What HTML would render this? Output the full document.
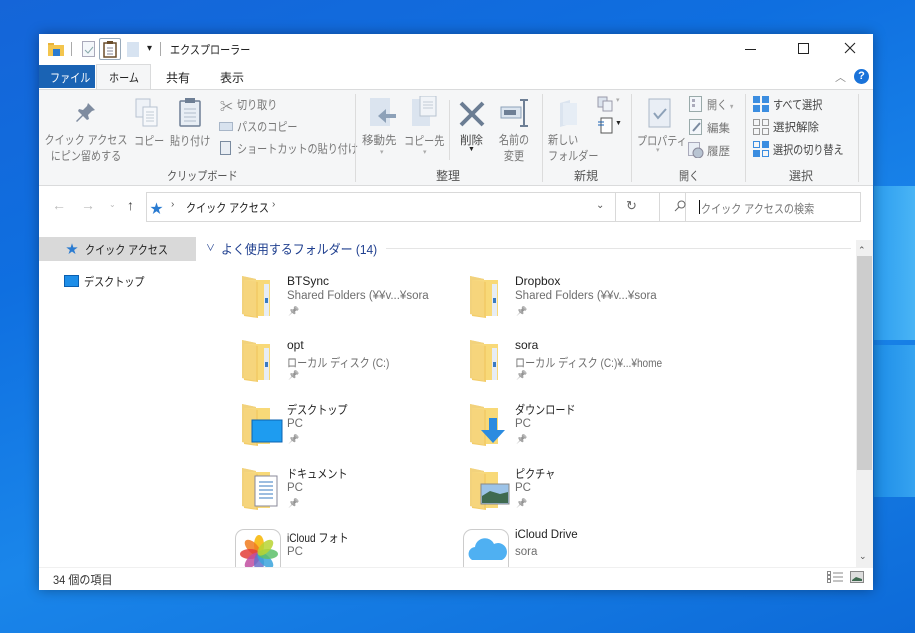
<!DOCTYPE html>
<html><head><meta charset="utf-8">
<style>
*{margin:0;padding:0;box-sizing:border-box}
body{width:915px;height:633px;overflow:hidden;position:relative;font-family:"Liberation Sans","Noto Sans CJK JP",sans-serif;font-size:12px;color:#222;
background:linear-gradient(160deg,#1565d8 0%,#0f6fe0 30%,#1a86ea 60%,#0d6ad8 100%)}
.a{position:absolute;white-space:nowrap}
.j{transform:scaleX(.84);transform-origin:0 0}
.jc{transform:scaleX(.84);transform-origin:50% 0;text-align:center}
.l{font-size:11.5px}
.win{position:absolute;left:39px;top:34px;width:834px;height:556px;background:#fff;box-shadow:0 0 12px rgba(0,0,0,.35)}
.g{color:#444}
.dim{color:#777}
.lbl{color:#555}
.sep{position:absolute;width:1px;background:#dcdcdc}
.sub{color:#6d6d6d}
.pin{color:#999;font-size:9px;filter:grayscale(1);opacity:.6}
</style></head><body>
<div class="a" style="left:874px;top:186px;width:41px;height:154px;background:linear-gradient(90deg,#2ea0f0,#4fbaf7);opacity:.9"></div>
<div class="a" style="left:874px;top:345px;width:41px;height:152px;background:linear-gradient(90deg,#1e8fe8,#3aa8f2);opacity:.9"></div>

<div class="win">
<svg class="a" style="left:9px;top:8px" width="16" height="14"><rect x="0" y="1" width="6" height="3" fill="#e8b33a"/><rect x="0" y="3" width="16" height="11" fill="#f3c54e"/><rect x="5" y="7" width="7" height="7" fill="#2a7bd1"/></svg>
<div class="a" style="left:32px;top:8px;width:1px;height:14px;background:#aaa"></div>
<svg class="a" style="left:43px;top:7px" width="14" height="16"><rect x=".5" y=".5" width="12" height="15" fill="#f4f7fb" stroke="#aab"/><path d="M3 9l3 3 5-6" stroke="#8aa" fill="none"/></svg>
<div class="a" style="left:60px;top:4px;width:22px;height:22px;border:1px solid #9ab;border-radius:2px"></div>
<svg class="a" style="left:64px;top:7px" width="14" height="17"><rect x="1" y="2" width="12" height="14" fill="#fff" stroke="#6b4d2a" stroke-width="1.5"/><rect x="4" y="0" width="6" height="3" fill="#6b4d2a"/><path d="M4 7h6M4 10h6M4 13h6" stroke="#889"/></svg>
<div class="a" style="left:88px;top:8px;width:12px;height:15px;background:#d7e3f1"></div>
<div class="a" style="left:108px;top:9px;font-size:10px">▾</div>
<div class="a" style="left:121px;top:8px;width:1px;height:14px;background:#aaa"></div>
<div class="a j" style="left:131px;top:7px;font-size:12px;color:#222">エクスプローラー</div>
<div class="a" style="left:706px;top:15px;width:11px;height:1px;background:#222"></div>
<div class="a" style="left:759px;top:9px;width:11px;height:11px;border:1px solid #222"></div>
<svg class="a" style="left:805px;top:8px" width="12" height="12"><path d="M1 1l10 10M11 1L1 11" stroke="#222" stroke-width="1.1"/></svg>

<div class="a" style="left:0;top:31px;width:56px;height:23px;background:#1a63b4"></div>
<div class="a j" style="left:11px;top:35px;color:#fff">ファイル</div>
<div class="a" style="left:57px;top:30px;width:55px;height:26px;background:#f5f6f7;border:1px solid #dadbdc;border-bottom:none"></div>
<div class="a j" style="left:70px;top:35px">ホーム</div>
<div class="a" style="left:127px;top:35px">共有</div>
<div class="a" style="left:181px;top:35px">表示</div>
<div class="a" style="left:796px;top:35px;color:#888;font-size:11px">︿</div>
<div class="a" style="left:815px;top:35px;width:15px;height:15px;border-radius:50%;background:#1a73d9;color:#fff;font-size:11px;font-weight:bold;text-align:center;line-height:15px">?</div>

<div class="a" style="left:0;top:55px;width:834px;height:97px;background:#f5f6f7;border-top:1px solid #dadbdc;border-bottom:1px solid #dadbdc"></div>
<svg class="a" style="left:36px;top:67px" width="22" height="24"><path d="M13 2l7 7-3 1-4 4 1 4-2 1-4-4-6 6-1-1 6-6-4-4 1-2 4 1 4-4z" fill="#7f8ca0"/></svg>
<div class="a dim jc" style="left:-3px;top:98px;width:100px;line-height:16px">クイック アクセス<br>にピン留めする</div>
<svg class="a" style="left:96px;top:64px" width="24" height="30"><rect x="1" y="1" width="14" height="18" fill="#eef2f7" stroke="#b8c3d0"/><rect x="8" y="9" width="14" height="19" fill="#f6f8fb" stroke="#b8c3d0"/><path d="M11 14h8M11 17h8M11 20h8M11 23h8" stroke="#c2cbd6"/></svg>
<div class="a dim j" style="left:95px;top:98px">コピー</div>
<svg class="a" style="left:139px;top:63px" width="24" height="30"><rect x="2" y="4" width="20" height="25" rx="1" fill="#e8eef5" stroke="#6e7f95" stroke-width="1.5"/><rect x="7" y="1" width="10" height="5" fill="#6e7f95"/><path d="M6 12h12M6 16h12M6 20h12M6 24h12" stroke="#b0bccc"/></svg>
<div class="a dim j" style="left:131px;top:98px">貼り付け</div>
<div class="a dim" style="left:181px;top:62px;font-size:13px">✂</div>
<div class="a dim j" style="left:198px;top:62px">切り取り</div>
<div class="a" style="left:180px;top:88px;width:14px;height:9px;background:#d8e2ee;border:1px solid #a8b6c8"></div>
<div class="a dim j" style="left:198px;top:84px">パスのコピー</div>
<div class="a" style="left:181px;top:107px;width:11px;height:14px;border:1px solid #7a8ba0;background:#e9eef4"></div>
<div class="a dim j" style="left:198px;top:106px">ショートカットの貼り付け</div>
<div class="a lbl j" style="left:128px;top:133px">クリップボード</div>
<div class="sep" style="left:316px;top:60px;height:88px"></div>

<svg class="a" style="left:331px;top:64px" width="26" height="30"><rect x="0" y="0" width="20" height="28" fill="#dbe4ef"/><path d="M26 16h-10v-5l-8 7 8 7v-5h10z" fill="#8da1b8"/></svg>
<div class="a dim" style="left:323px;top:98px;font-size:11.5px">移動先</div>
<svg class="a" style="left:373px;top:62px" width="26" height="32"><rect x="0" y="3" width="18" height="27" fill="#dbe4ef"/><rect x="8" y="0" width="16" height="20" fill="#f1f4f8" stroke="#b8c3d0"/><path d="M11 6h10M11 9h10M11 12h10" stroke="#c2cbd6"/></svg>
<div class="a dim j" style="left:365px;top:98px">コピー先</div>
<div class="a" style="left:341px;top:114px;color:#aaa;font-size:7px">▾</div><div class="a" style="left:384px;top:114px;color:#aaa;font-size:7px">▾</div>
<div class="sep" style="left:410px;top:66px;height:60px"></div>
<svg class="a" style="left:420px;top:67px" width="26" height="26"><path d="M2 2l22 22M24 2L2 24" stroke="#6b7d93" stroke-width="4"/></svg>
<div class="a g" style="left:421px;top:98px;font-size:11.5px">削除</div>
<div class="a" style="left:429px;top:112px;font-size:7px">▼</div>
<svg class="a" style="left:461px;top:64px" width="30" height="30"><rect x="1" y="9" width="20" height="11" fill="#dce5ef" stroke="#8da1b8"/><rect x="4" y="12" width="12" height="5" fill="#6e7f95"/><path d="M24 2v26M20 2h8M20 28h8" stroke="#6e7f95" stroke-width="2"/></svg>
<div class="a dim jc" style="left:455px;top:98px;width:40px;line-height:16px">名前の<br>変更</div>
<div class="a lbl" style="left:397px;top:133px">整理</div>
<div class="sep" style="left:503px;top:60px;height:88px"></div>

<svg class="a" style="left:519px;top:65px" width="24" height="30"><path d="M2 4l10-3v24L2 28z" fill="#dbe4ef"/><rect x="5" y="4" width="14" height="22" fill="#e6edf5"/></svg>
<div class="a dim j" style="left:509px;top:98px;line-height:16px">新しい<br>フォルダー</div>
<svg class="a" style="left:558px;top:62px" width="22" height="16"><rect x="1" y="1" width="9" height="10" fill="#dce4ee" stroke="#99a"/><rect x="6" y="5" width="9" height="10" fill="#eef2f7" stroke="#99a"/></svg>
<div class="a" style="left:577px;top:62px;color:#aaa;font-size:7px">▾</div>
<svg class="a" style="left:559px;top:83px" width="16" height="18"><rect x="3" y="1" width="11" height="15" fill="#fff" stroke="#555"/><path d="M0 5h6M0 8h6" stroke="#1a63b4"/></svg>
<div class="a" style="left:576px;top:86px;font-size:7px">▼</div>
<div class="a lbl" style="left:535px;top:133px">新規</div>
<div class="sep" style="left:592px;top:60px;height:88px"></div>

<svg class="a" style="left:609px;top:64px" width="24" height="30"><rect x="1" y="1" width="21" height="28" fill="#e9eef5" stroke="#aab8c8"/><path d="M6 15l4 5 8-9" stroke="#8da1b8" stroke-width="2" fill="none"/></svg>
<div class="a dim j" style="left:598px;top:98px">プロパティ</div>
<div class="a" style="left:617px;top:112px;color:#aaa;font-size:7px">▾</div>
<svg class="a" style="left:650px;top:62px" width="14" height="16"><rect x=".5" y=".5" width="12" height="15" fill="#f3f6fa" stroke="#9aa"/><rect x="3" y="3" width="3" height="3" fill="#aab"/><rect x="3" y="8" width="3" height="3" fill="#aab"/></svg>
<div class="a dim j" style="left:668px;top:62px">開く <span style="font-size:8px;color:#aaa">▾</span></div>
<svg class="a" style="left:650px;top:85px" width="14" height="16"><rect x=".5" y=".5" width="12" height="15" fill="#f3f6fa" stroke="#9aa"/><path d="M4 12l7-8" stroke="#7a8aa0" stroke-width="2"/></svg>
<div class="a dim" style="left:668px;top:86px;font-size:11.5px">編集</div>
<svg class="a" style="left:649px;top:108px" width="16" height="16"><rect x=".5" y=".5" width="11" height="13" fill="#e9eef5" stroke="#aab"/><circle cx="10" cy="11" r="5" fill="#b8c4d2" stroke="#889"/></svg>
<div class="a dim" style="left:668px;top:109px;font-size:11.5px">履歴</div>
<div class="a lbl j" style="left:640px;top:133px">開く</div>
<div class="sep" style="left:706px;top:60px;height:88px"></div>

<svg class="a" style="left:714px;top:62px" width="16" height="16"><rect x="0" y="0" width="7" height="7" fill="#3b8de0"/><rect x="9" y="0" width="7" height="7" fill="#3b8de0"/><rect x="0" y="9" width="7" height="7" fill="#3b8de0"/><rect x="9" y="9" width="7" height="7" fill="#3b8de0"/></svg>
<div class="a g j" style="left:734px;top:62px">すべて選択</div>
<svg class="a" style="left:714px;top:85px" width="16" height="16" fill="none" stroke="#999"><rect x=".5" y=".5" width="6" height="6"/><rect x="9.5" y=".5" width="6" height="6"/><rect x=".5" y="9.5" width="6" height="6"/><rect x="9.5" y="9.5" width="6" height="6"/></svg>
<div class="a g" style="left:734px;top:85px;font-size:11.5px">選択解除</div>
<svg class="a" style="left:714px;top:107px" width="16" height="16"><rect x=".5" y=".5" width="6" height="6" fill="none" stroke="#3b8de0"/><rect x="9" y="0" width="7" height="7" fill="#3b8de0"/><rect x="0" y="9" width="7" height="7" fill="#3b8de0"/><rect x="9.5" y="9.5" width="6" height="6" fill="none" stroke="#3b8de0"/></svg>
<div class="a g j" style="left:734px;top:107px">選択の切り替え</div>
<div class="a lbl" style="left:750px;top:133px">選択</div>
<div class="sep" style="left:819px;top:60px;height:88px"></div>

<div class="a" style="left:13px;top:163px;color:#bbb;font-size:14px">←</div>
<div class="a" style="left:42px;top:163px;color:#bbb;font-size:14px">→</div>
<div class="a" style="left:70px;top:166px;color:#bbb;font-size:8px">⌄</div>
<div class="a" style="left:88px;top:163px;color:#444;font-size:14px">↑</div>
<div class="a" style="left:107px;top:158px;width:540px;height:30px;border:1px solid #d9d9d9"></div>
<div class="a" style="left:576px;top:158px;width:1px;height:30px;background:#d9d9d9"></div>
<div class="a" style="left:111px;top:164px;color:#2a7bd1;font-size:13px">★</div>
<div class="a" style="left:132px;top:165px;color:#555;font-size:10px">›</div>
<div class="a j" style="left:147px;top:165px">クイック アクセス</div>
<div class="a" style="left:233px;top:165px;color:#555;font-size:10px">›</div>
<div class="a" style="left:557px;top:166px;color:#555;font-size:10px">⌄</div>
<div class="a" style="left:587px;top:164px;color:#666;font-size:13px">↻</div>
<div class="a" style="left:620px;top:158px;width:202px;height:30px;border:1px solid #d9d9d9"></div>
<svg class="a" style="left:635px;top:166px" width="12" height="12" fill="none" stroke="#666"><circle cx="7.5" cy="4.5" r="3.5"/><path d="M5 7l-4 4"/></svg>
<div class="a" style="left:660px;top:166px;width:1px;height:14px;background:#111"></div>
<div class="a j" style="left:662px;top:166px;color:#777">クイック アクセスの検索</div>

<div class="a" style="left:0;top:203px;width:157px;height:24px;background:#d9d9d9"></div>
<div class="a" style="left:27px;top:206px;color:#2a7bd1;font-size:12px">★</div>
<div class="a j" style="left:46px;top:207px">クイック アクセス</div>
<div class="a" style="left:25px;top:241px;width:15px;height:12px;background:#1e8ee8;border:1px solid #0a5fb0"></div>
<div class="a j" style="left:45px;top:239px">デスクトップ</div>

<div class="a" style="left:167px;top:207px;color:#1f3f8f;font-size:9px">∨</div>
<div class="a" style="left:182px;top:205px;color:#1f3f8f;font-size:13px;transform:scaleX(.92);transform-origin:0 0">よく使用するフォルダー (14)</div>
<div class="a" style="left:347px;top:214px;width:465px;height:1px;background:#e5e5e5"></div>

<svg width="0" height="0" style="position:absolute"><defs>
<g id="fold"><path d="M2 2l14 3v38l-14-3z" fill="#e8c46a"/><path d="M4 6h26v36H4z" fill="#f8d978"/><path d="M4 6l14 2v36l-14-2z" fill="#f3cd6a"/><path d="M2 2l14 3v38l-14-3z" fill="#f6d885" opacity=".7"/></g>
</defs></svg>

<svg class="a" style="left:201px;top:240px" width="36" height="46"><use href="#fold"/><rect x="24" y="10" width="5" height="32" fill="#e7edf4"/><rect x="25" y="24" width="3" height="5" fill="#3a7bc2"/></svg>
<div class="a" style="left:248px;top:240px">BTSync</div><div class="a sub l" style="left:248px;top:256px">Shared Folders (¥¥v...¥sora</div><div class="a pin" style="left:249px;top:272px">📌</div>
<svg class="a" style="left:201px;top:304px" width="36" height="46"><use href="#fold"/><rect x="24" y="10" width="5" height="32" fill="#e7edf4"/><rect x="25" y="24" width="3" height="5" fill="#3a7bc2"/></svg>
<div class="a" style="left:248px;top:304px">opt</div><div class="a sub j" style="left:248px;top:320px">ローカル ディスク (C:)</div><div class="a pin" style="left:249px;top:336px">📌</div>
<svg class="a" style="left:201px;top:368px" width="44" height="46"><use href="#fold"/><rect x="12" y="18" width="30" height="22" fill="#1e9cf0" stroke="#0c63b0"/></svg>
<div class="a j" style="left:248px;top:367px">デスクトップ</div><div class="a sub l" style="left:248px;top:384px">PC</div><div class="a pin" style="left:249px;top:400px">📌</div>
<svg class="a" style="left:201px;top:432px" width="40" height="46"><use href="#fold"/><rect x="15" y="10" width="22" height="30" fill="#fff" stroke="#889"/><path d="M19 16h14M19 20h14M19 24h14M19 28h14M19 32h14" stroke="#3a7bc2"/></svg>
<div class="a j" style="left:248px;top:431px">ドキュメント</div><div class="a sub l" style="left:248px;top:448px">PC</div><div class="a pin" style="left:249px;top:464px">📌</div>
<div class="a" style="left:196px;top:495px;width:46px;height:38px;border:1px solid #ccc;border-bottom:none;border-radius:9px 9px 0 0;overflow:hidden;background:#fff">
<svg width="46" height="38"><g transform="translate(23,24)">
<ellipse rx="5" ry="10" cy="-9" fill="#f7b500" opacity=".85"/><ellipse rx="5" ry="10" cy="-9" fill="#f07b1e" opacity=".85" transform="rotate(-45)"/><ellipse rx="5" ry="10" cy="-9" fill="#e3403a" opacity=".85" transform="rotate(-90)"/><ellipse rx="5" ry="10" cy="-9" fill="#c14da0" opacity=".85" transform="rotate(-135)"/><ellipse rx="5" ry="10" cy="-9" fill="#6a6ec8" opacity=".85" transform="rotate(180)"/><ellipse rx="5" ry="10" cy="-9" fill="#3aa3dc" opacity=".85" transform="rotate(135)"/><ellipse rx="5" ry="10" cy="-9" fill="#5cc06a" opacity=".85" transform="rotate(90)"/><ellipse rx="5" ry="10" cy="-9" fill="#b8d432" opacity=".85" transform="rotate(45)"/></g></svg></div>
<div class="a j" style="left:248px;top:495px">iCloud フォト</div><div class="a sub l" style="left:248px;top:512px">PC</div>

<svg class="a" style="left:429px;top:240px" width="36" height="46"><use href="#fold"/><rect x="24" y="10" width="5" height="32" fill="#e7edf4"/><rect x="25" y="24" width="3" height="5" fill="#3a7bc2"/></svg>
<div class="a" style="left:476px;top:240px">Dropbox</div><div class="a sub l" style="left:476px;top:256px">Shared Folders (¥¥v...¥sora</div><div class="a pin" style="left:477px;top:272px">📌</div>
<svg class="a" style="left:429px;top:304px" width="36" height="46"><use href="#fold"/><rect x="24" y="10" width="5" height="32" fill="#e7edf4"/><rect x="25" y="24" width="3" height="5" fill="#3a7bc2"/></svg>
<div class="a" style="left:476px;top:304px">sora</div><div class="a sub j" style="left:476px;top:320px">ローカル ディスク (C:)¥...¥home</div><div class="a pin" style="left:477px;top:336px">📌</div>
<svg class="a" style="left:429px;top:368px" width="44" height="46"><use href="#fold"/><path d="M21 16h8v12h8l-12 13-12-13h8z" fill="#2b8be0"/></svg>
<div class="a j" style="left:476px;top:367px">ダウンロード</div><div class="a sub l" style="left:476px;top:384px">PC</div><div class="a pin" style="left:477px;top:400px">📌</div>
<svg class="a" style="left:429px;top:432px" width="44" height="46"><use href="#fold"/><rect x="13" y="18" width="28" height="20" fill="#9cc3e8" stroke="#888"/><path d="M14 30l8-5 10 3 8-2v11H14z" fill="#3f6a50"/></svg>
<div class="a j" style="left:476px;top:431px">ピクチャ</div><div class="a sub l" style="left:476px;top:448px">PC</div><div class="a pin" style="left:477px;top:464px">📌</div>
<div class="a" style="left:424px;top:495px;width:46px;height:38px;border:1px solid #ccc;border-bottom:none;border-radius:9px 9px 0 0;overflow:hidden;background:#fff">
<svg width="46" height="38"><path d="M8 30a7 7 0 0 1 3-13 10 10 0 0 1 19-3 8 8 0 0 1 8 16z" fill="#4fb0f2"/></svg></div>
<div class="a" style="left:476px;top:495px;font-size:11.5px">iCloud Drive</div><div class="a sub l" style="left:476px;top:512px">sora</div>

<div class="a" style="left:817px;top:206px;width:17px;height:327px;background:#f0f0f0"></div>
<div class="a" style="left:819px;top:211px;color:#555;font-size:9px">⌃</div>
<div class="a" style="left:818px;top:222px;width:15px;height:214px;background:#cdcdcd"></div>
<div class="a" style="left:820px;top:517px;color:#555;font-size:9px">⌄</div>

<div class="a" style="left:0;top:533px;width:834px;height:1px;background:#f0f0f0"></div>
<div class="a" style="left:14px;top:537px;color:#333;transform:scaleX(.92);transform-origin:0 0">34 個の項目</div>
<svg class="a" style="left:788px;top:537px" width="16" height="12" fill="none" stroke="#888"><rect x=".5" y=".5" width="3" height="3"/><rect x=".5" y="4.5" width="3" height="3"/><rect x=".5" y="8.5" width="3" height="3"/><path d="M6 2h10M6 6h10M6 10h10"/></svg>
<svg class="a" style="left:811px;top:537px" width="14" height="12"><rect x=".5" y=".5" width="13" height="11" fill="#ddd" stroke="#888"/><path d="M2 9l4-3 6 2v2H2z" fill="#3f6a50"/></svg>
</div>
</body></html>
